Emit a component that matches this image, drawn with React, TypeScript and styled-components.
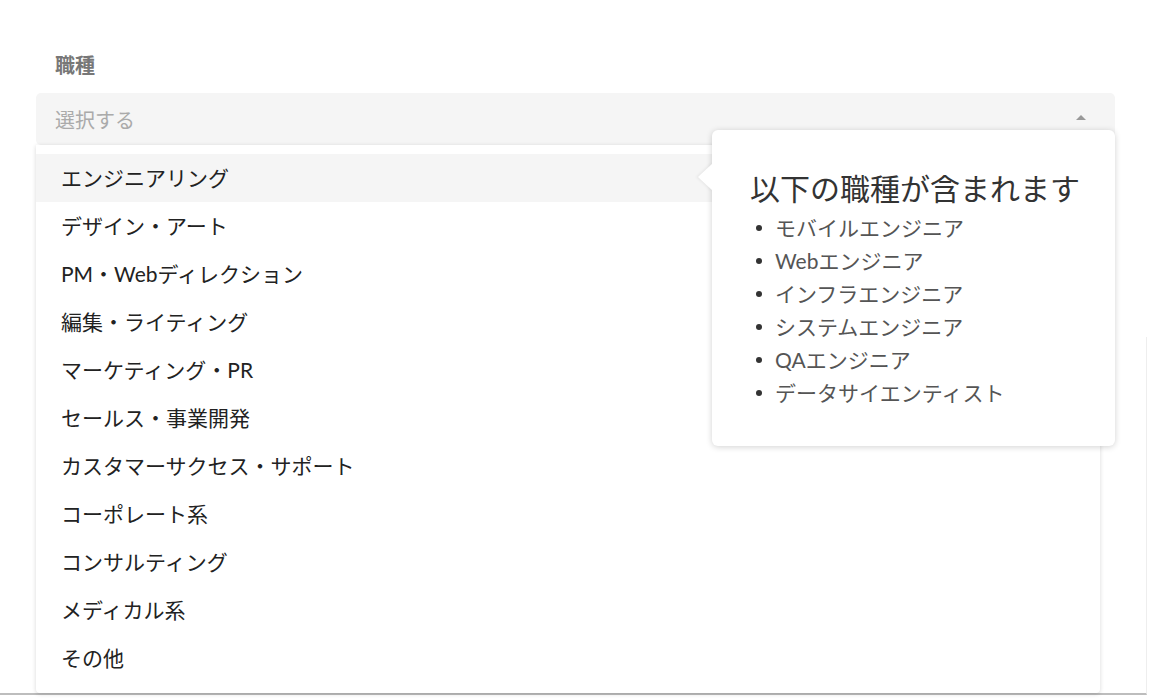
import React from 'react'
import styled, { createGlobalStyle } from 'styled-components'

const GlobalStyle = createGlobalStyle`
  html, body {
    margin: 0;
    padding: 0;
    background: #fff;
  }
  body {
    font-family: Lato, "Noto Sans CJK JP", sans-serif;
    color: #222;
  }
  * {
    box-sizing: border-box;
  }
`

const Page = styled.div`
  width: 1155px;
  height: 700px;
  overflow: hidden;
  display: flex;
  flex-direction: column;
`

const Field = styled.div`
  padding: 50px 40px 0 36px;
`

const Label = styled.div`
  font-size: 20px;
  font-weight: 700;
  color: #777;
  line-height: 30px;
  padding-left: 19px;
  margin-bottom: 13px;
`

const SelectBox = styled.div`
  position: relative;
  height: 52px;
  background: #f5f5f5;
  border-radius: 5px;
  display: flex;
  align-items: center;
  justify-content: space-between;
  padding: 0 29px 0 19px;
`

const Placeholder = styled.span`
  font-size: 20px;
  color: #aaa;
`

const Caret = styled.span`
  width: 0;
  height: 0;
  border-left: 5px solid transparent;
  border-right: 5px solid transparent;
  border-bottom: 5px solid #999;
  margin-top: -4px;
`

const Menu = styled.ul`
  position: absolute;
  top: 52px;
  left: 0;
  right: 15px;
  margin: 0;
  padding: 9px 0 11px;
  list-style: none;
  background: #fff;
  border-radius: 0 0 4px 4px;
  box-shadow: 0 1px 4px rgba(0, 0, 0, 0.16);
  z-index: 2;
`

const MenuItem = styled.li<{ $active?: boolean }>`
  height: 48px;
  display: flex;
  align-items: center;
  padding: 0 0 3px 25px;
  font-size: 21px;
  color: #222;
  background: ${p => (p.$active ? '#f5f5f5' : 'transparent')};
`

const Tooltip = styled.div`
  position: absolute;
  top: 37px;
  left: 676px;
  width: 403px;
  height: 316px;
  background: #fff;
  border-radius: 6px;
  box-shadow: 0 1px 6px rgba(0, 0, 0, 0.18);
  padding: 38px 20px 0 38px;
  z-index: 3;

  &::before {
    content: '';
    position: absolute;
    left: -14px;
    top: 33px;
    width: 0;
    height: 0;
    border-top: 14px solid transparent;
    border-bottom: 14px solid transparent;
    border-right: 15px solid #fff;
    filter: drop-shadow(-2px 0 1px rgba(0, 0, 0, 0.05));
  }
`

const TipTitle = styled.div`
  font-size: 30px;
  color: #333;
  line-height: 40px;
  margin-bottom: 3px;
`

const TipList = styled.ul`
  margin: 0;
  padding: 0;
  list-style: none;
  color: #555;
  font-size: 21px;
`

const TipItem = styled.li`
  display: flex;
  align-items: center;
  line-height: 33px;

  &::before {
    content: '';
    width: 6px;
    height: 6px;
    border-radius: 50%;
    background: #333;
    margin: 0 13px 0 6px;
  }
`

const Sheet = styled.div`
  margin-top: auto;
  width: 1147px;
  height: 358px;
  border-right: 1px solid #eee;
  border-bottom: 2px solid #bdbdbd;
  margin-bottom: 5px;
`

const categories = [
  'エンジニアリング',
  'デザイン・アート',
  'PM・Webディレクション',
  '編集・ライティング',
  'マーケティング・PR',
  'セールス・事業開発',
  'カスタマーサクセス・サポート',
  'コーポレート系',
  'コンサルティング',
  'メディカル系',
  'その他',
]

const roles = [
  'モバイルエンジニア',
  'Webエンジニア',
  'インフラエンジニア',
  'システムエンジニア',
  'QAエンジニア',
  'データサイエンティスト',
]

export default function App() {
  return (
    <>
      <GlobalStyle />
      <Page>
        <Field>
          <Label>職種</Label>
          <SelectBox>
            <Placeholder>選択する</Placeholder>
            <Caret />
            <Menu>
              {categories.map((c, i) => (
                <MenuItem key={c} $active={i === 0}>
                  {c}
                </MenuItem>
              ))}
            </Menu>
            <Tooltip>
              <TipTitle>以下の職種が含まれます</TipTitle>
              <TipList>
                {roles.map(r => (
                  <TipItem key={r}>{r}</TipItem>
                ))}
              </TipList>
            </Tooltip>
          </SelectBox>
        </Field>
        <Sheet />
      </Page>
    </>
  )
}
